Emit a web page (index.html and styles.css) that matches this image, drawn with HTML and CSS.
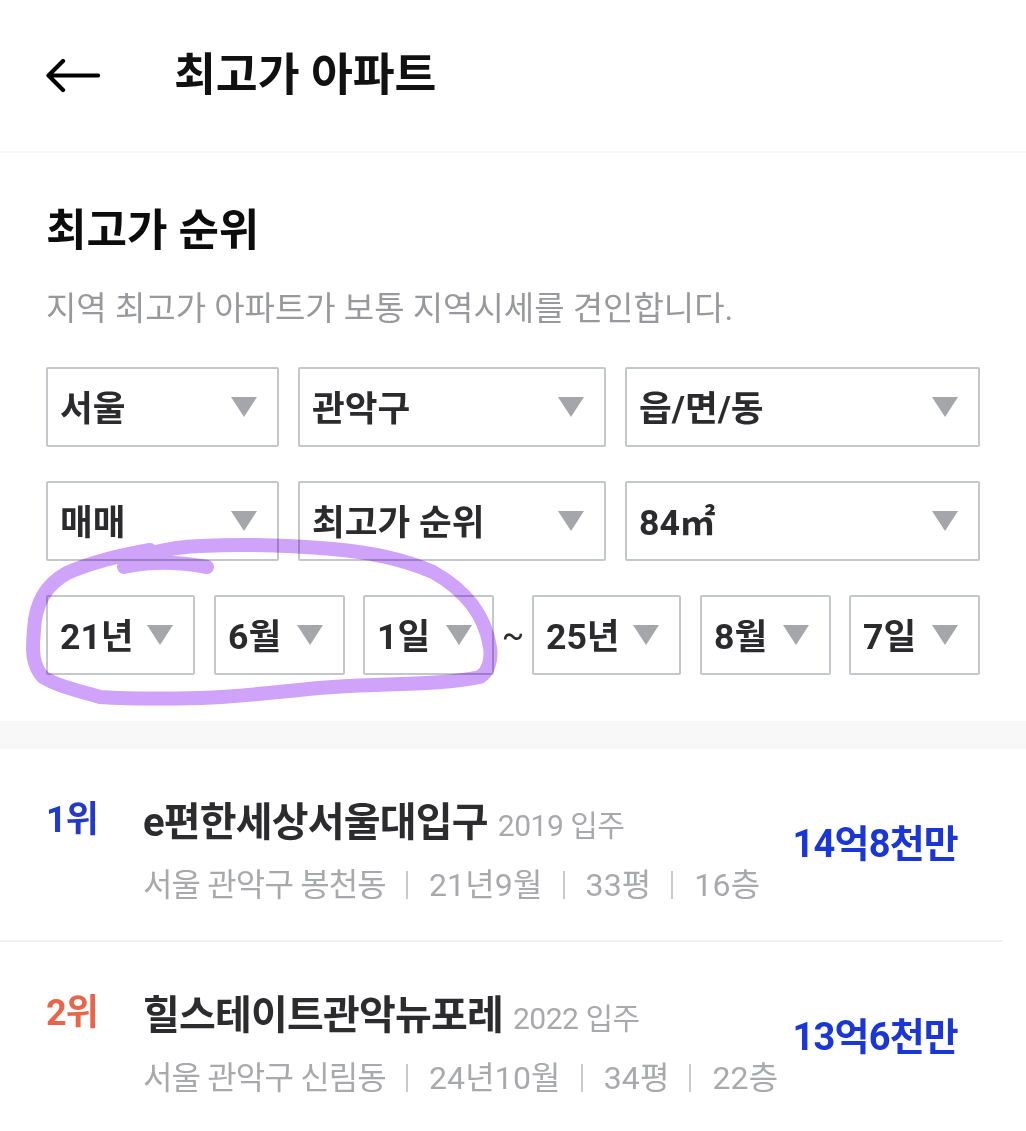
FILE: index.html
```html
<!DOCTYPE html>
<html lang="ko">
<head>
<meta charset="utf-8">
<title>최고가 아파트</title>
<link rel="stylesheet" href="styles.css">
</head>
<body>
<div class="page">
  <header class="topbar">
    <svg class="back" viewBox="0 0 54 34" width="54" height="34" aria-hidden="true"><path d="M52 16.500H3M17 2 2.500 16.500 17 31" fill="none" stroke="#000" stroke-width="4.200" stroke-linecap="round" stroke-linejoin="round"/></svg>
    <h1 class="title">최고가 아파트</h1>
  </header>
  <section class="filters">
    <h2 class="heading">최고가 순위</h2>
    <p class="desc">지역 최고가 아파트가 보통 지역시세를 견인합니다.</p>
    <div class="grid">
      <div class="select"><span>서울</span><i class="caret"></i></div>
      <div class="select"><span>관악구</span><i class="caret"></i></div>
      <div class="select"><span>읍/면/동</span><i class="caret"></i></div>
      <div class="select"><span>매매</span><i class="caret"></i></div>
      <div class="select"><span>최고가 순위</span><i class="caret"></i></div>
      <div class="select"><span>84㎡</span><i class="caret"></i></div>
    </div>
    <div class="dates">
      <div class="select year"><span>21년</span><i class="caret"></i></div>
      <div class="select short"><span>6월</span><i class="caret"></i></div>
      <div class="select short"><span>1일</span><i class="caret"></i></div>
      <span class="tilde">~</span>
      <div class="select year"><span>25년</span><i class="caret"></i></div>
      <div class="select short"><span>8월</span><i class="caret"></i></div>
      <div class="select short"><span>7일</span><i class="caret"></i></div>
    </div>
  </section>
  <div class="band"></div>
  <ul class="list">
    <li class="item">
      <span class="rank first">1위</span>
      <div class="info">
        <div class="line"><strong class="name">e편한세상서울대입구</strong><span class="year-built">2019 입주</span></div>
        <div class="meta"><span class="place">서울 관악구 봉천동</span><b class="sep"></b><span>21년9월</span><b class="sep"></b><span>33평</span><b class="sep"></b><span>16층</span></div>
      </div>
      <span class="price">14억8천만</span>
    </li>
    <li class="item">
      <span class="rank second">2위</span>
      <div class="info">
        <div class="line"><strong class="name">힐스테이트관악뉴포레</strong><span class="year-built">2022 입주</span></div>
        <div class="meta"><span class="place">서울 관악구 신림동</span><b class="sep"></b><span>24년10월</span><b class="sep"></b><span>34평</span><b class="sep"></b><span>22층</span></div>
      </div>
      <span class="price">13억6천만</span>
    </li>
  </ul>
  <svg class="scribble" viewBox="0 0 1026 1131" width="1026" height="1131" aria-hidden="true"><path d="M207 567C180 562 150 561 124 567C130 558 165 547 200 546C260 543 300 546 333 549C380 553 410 562 433 572C465 590 485 615 490 647C492 660 488 672 480 677C440 685 400 683 350 686C300 688 260 696 200 698C160 699 130 699 100 697C75 690 55 685 43 677C32 665 32 650 34 630C35 605 45 585 67 573C85 565 110 557 150 550" fill="none" stroke="#cfa3fa" stroke-width="14" stroke-linecap="round" stroke-linejoin="round"/></svg>
</div>
</body>
</html>
```
FILE: styles.css
```css
* { box-sizing: border-box; }
html, body { margin: 0; padding: 0; background: #fff; }
body { font-family: Roboto, "Noto Sans CJK KR", sans-serif; color: #2b2b2e; }
.page { position: relative; width: 1026px; height: 1131px; overflow: hidden; }

.topbar { height: 153px; display: flex; align-items: center; padding: 0 0 0 46px; border-bottom: 2px solid #f8f8f8; }
.back { flex: none; margin-right: 74px; }
.title { margin: 0; font-size: 45.500px; font-weight: 700; line-height: 1; color: #111; }

.filters { padding: 52px 46px 46px; }
.heading { margin: 0; font-size: 44px; font-weight: 700; line-height: 52px; color: #0c0c0c; }
.desc { margin: 32px 0 0; font-size: 33px; line-height: 40px; color: #98999c; }

.grid { display: grid; grid-template-columns: 233px 308px 355px; gap: 34px 19px; margin-top: 38px; }
.dates { display: flex; align-items: center; margin-top: 34px; }

.select { height: 80px; display: flex; align-items: center; justify-content: space-between; padding: 0 20px 0 12px; border: 2px solid #c3c6cb; border-radius: 2px; font-size: 35.600px; font-weight: 700; background: transparent; }
.select span { margin-bottom: 3px; }
.caret { flex: none; width: 0; height: 0; border-left: 13px solid transparent; border-right: 13px solid transparent; border-top: 20px solid #a5a6a9; }
.year { width: 149px; margin-right: 19px; padding-right: 20px; }
.short { width: 131px; margin-right: 18px; padding-right: 20px; }
.dates .short:nth-child(3) { margin-right: 6px; }
.dates .short:last-child { margin-right: 0; }
.tilde { width: 26px; margin-right: 6px; font-size: 33px; font-weight: 400; text-align: center; }

.band { height: 28px; background: #f8f8f8; }

.list { list-style: none; margin: 0; padding: 0; }
.item { position: relative; display: flex; width: 1003px; height: 193px; padding: 46px 0 0 46px; border-bottom: 2px solid #f0f0f1; }
.rank { flex: none; width: 97px; height: 44px; margin-top: 3px; font-size: 36px; font-weight: 700; line-height: 44px; letter-spacing: -1px; }
.first { color: #2339c9; }
.second { color: #e8654a; }
.info { flex: 1; min-width: 0; }
.line { display: flex; align-items: baseline; height: 56px; }
.name { font-size: 40px; font-weight: 700; line-height: 56px; letter-spacing: -0.800px; color: #2c2c2f; }
.year-built { margin-left: 10px; font-size: 30px; letter-spacing: -0.500px; color: #a8a9ac; }
.meta { display: flex; align-items: center; margin-top: 8px; font-size: 32px; line-height: 52px; letter-spacing: 0.150px; color: #a8a9ac; }
.place { letter-spacing: -0.850px; }
.sep { width: 2px; height: 28px; margin: 0 21px 0 20px; background: #c9cacc; }
.price { position: absolute; right: 45px; top: 71px; font-size: 38px; font-weight: 700; line-height: 48px; letter-spacing: -0.800px; color: #1a36d6; }

.scribble { position: absolute; left: 0; top: 0; mix-blend-mode: multiply; pointer-events: none; }
```
